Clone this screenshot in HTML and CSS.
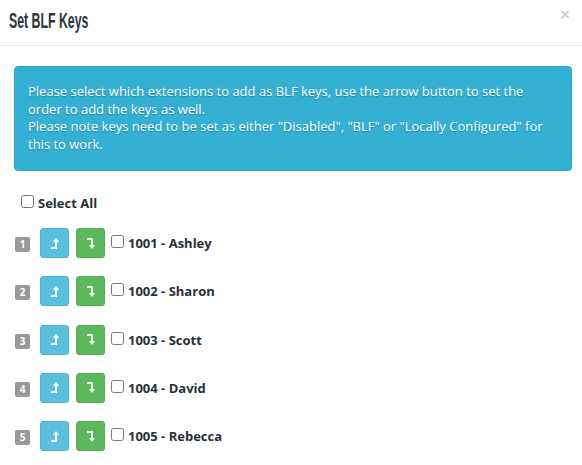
FILE: index.html
```html
<!DOCTYPE html>
<html lang="en">
<head>
    <meta charset="UTF-8">
    <meta name="viewport" content="width=device-width, initial-scale=1.0">
    <title>Set BLF Keys</title>
    <link rel="stylesheet" href="styles.css">
</head>
<body>
    <div class="modal">
        <div class="modal-header">
            <h4 class="modal-title">Set BLF Keys</h4>
            <button class="close" type="button">&times;</button>
        </div>
        <div class="modal-body">
            <div class="alert">
                Please select which extensions to add as BLF keys, use the arrow button to set the order to add the keys as well.<br>
                Please note keys need to be set as either "Disabled", "BLF" or "Locally Configured" for this to work.
            </div>

            <label class="select-all"><input type="checkbox"> Select All</label>

            <div class="blf-list">
                <!-- one row per extension -->
                <div class="blf-row">
                    <span class="badge">1</span>
                    <button class="btn btn-up"><svg viewBox="0 0 8 11" width="8" height="11"><path d="M5 0 L8 4 L6 4 L6 11 L0 11 L0 9 L4 9 L4 4 L2 4 Z"/></svg></button>
                    <button class="btn btn-down"><svg viewBox="0 0 8 11" width="8" height="11"><path d="M0 0 L6 0 L6 7 L8 7 L5 11 L2 7 L4 7 L4 2 L0 2 Z"/></svg></button>
                    <label class="ext"><input type="checkbox"> 1001 - Ashley</label>
                </div>
                <div class="blf-row">
                    <span class="badge">2</span>
                    <button class="btn btn-up"><svg viewBox="0 0 8 11" width="8" height="11"><path d="M5 0 L8 4 L6 4 L6 11 L0 11 L0 9 L4 9 L4 4 L2 4 Z"/></svg></button>
                    <button class="btn btn-down"><svg viewBox="0 0 8 11" width="8" height="11"><path d="M0 0 L6 0 L6 7 L8 7 L5 11 L2 7 L4 7 L4 2 L0 2 Z"/></svg></button>
                    <label class="ext"><input type="checkbox"> 1002 - Sharon</label>
                </div>
                <div class="blf-row">
                    <span class="badge">3</span>
                    <button class="btn btn-up"><svg viewBox="0 0 8 11" width="8" height="11"><path d="M5 0 L8 4 L6 4 L6 11 L0 11 L0 9 L4 9 L4 4 L2 4 Z"/></svg></button>
                    <button class="btn btn-down"><svg viewBox="0 0 8 11" width="8" height="11"><path d="M0 0 L6 0 L6 7 L8 7 L5 11 L2 7 L4 7 L4 2 L0 2 Z"/></svg></button>
                    <label class="ext"><input type="checkbox"> 1003 - Scott</label>
                </div>
                <div class="blf-row">
                    <span class="badge">4</span>
                    <button class="btn btn-up"><svg viewBox="0 0 8 11" width="8" height="11"><path d="M5 0 L8 4 L6 4 L6 11 L0 11 L0 9 L4 9 L4 4 L2 4 Z"/></svg></button>
                    <button class="btn btn-down"><svg viewBox="0 0 8 11" width="8" height="11"><path d="M0 0 L6 0 L6 7 L8 7 L5 11 L2 7 L4 7 L4 2 L0 2 Z"/></svg></button>
                    <label class="ext"><input type="checkbox"> 1004 - David</label>
                </div>
                <div class="blf-row">
                    <span class="badge">5</span>
                    <button class="btn btn-up"><svg viewBox="0 0 8 11" width="8" height="11"><path d="M5 0 L8 4 L6 4 L6 11 L0 11 L0 9 L4 9 L4 4 L2 4 Z"/></svg></button>
                    <button class="btn btn-down"><svg viewBox="0 0 8 11" width="8" height="11"><path d="M0 0 L6 0 L6 7 L8 7 L5 11 L2 7 L4 7 L4 2 L0 2 Z"/></svg></button>
                    <label class="ext"><input type="checkbox"> 1005 - Rebecca</label>
                </div>
            </div>
        </div>
    </div>
</body>
</html>
```

FILE: styles.css
```css
body, html {
    margin: 0;
    background: #fff;
    font-family: "Open Sans", sans-serif;
    color: #333;
}
.modal-header {
    height: 46px;
    box-sizing: border-box;
    padding: 0 9px;
    border-bottom: 1px solid #e5e5e5;
    display: flex;
    align-items: center;
    justify-content: space-between;
}
.modal-title {
    margin: -3px 0 0 0;
    display: inline-block;
    font-family: "Liberation Sans", sans-serif;
    font-weight: bold;
    font-size: 22px;
    color: #2c3440;
    transform: scaleX(0.56); /* narrow display face */
    transform-origin: left center;
}
.close {
    border: 0;
    background: none;
    padding: 0;
    font-size: 17px;
    font-weight: bold;
    color: #d0d0d0;
    margin: -16px 3px 0 0;
    cursor: pointer;
}
.modal-body {
    padding: 20px 10px 0 14px;
}
.alert {
    background-color: #34b0d4;
    border: 1px solid #2ea7cb;
    border-radius: 4px;
    color: #fff;
    font-size: 13px;
    line-height: 17.5px;
    padding: 16px 14px 17px 13px;
    text-shadow: 0 1px 1px rgba(0, 0, 0, 0.25);
}
label {
    font-weight: bold;
    font-size: 13px;
    display: flex;
    align-items: center;
}
input[type=checkbox] {
    width: 13px;
    height: 13px;
    margin: 0 4px 3px 0;
}
.select-all {
    margin: 23px 0 0 7px;
    color: #2a2f38;
}
.blf-list {
    margin-top: 16px;
}
.blf-row {
    display: flex;
    align-items: center;
    height: 30px;
    margin-bottom: 18.25px;
}
.badge {
    width: 15px;
    height: 15px;
    margin: 3px 10px 0 1px;
    border-radius: 2px;
    background-color: #999;
    color: #fff;
    font-size: 10px;
    font-weight: bold;
    line-height: 15px;
    text-align: center;
}
.btn {
    width: 29px;
    height: 30px;
    border: 1px solid;
    border-radius: 3px;
    padding: 0;
    margin-right: 7px;
    display: flex;
    align-items: center;
    justify-content: center;
    cursor: pointer;
}
.btn svg {
    fill: #fff;
}
.btn-up {
    background-color: #5bc0de;
    border-color: #46b8da;
}
.btn-down {
    background-color: #5cb85c;
    border-color: #4cae4c;
}
.ext {
    margin-left: -1px;
    color: #2a2f38;
}
```
